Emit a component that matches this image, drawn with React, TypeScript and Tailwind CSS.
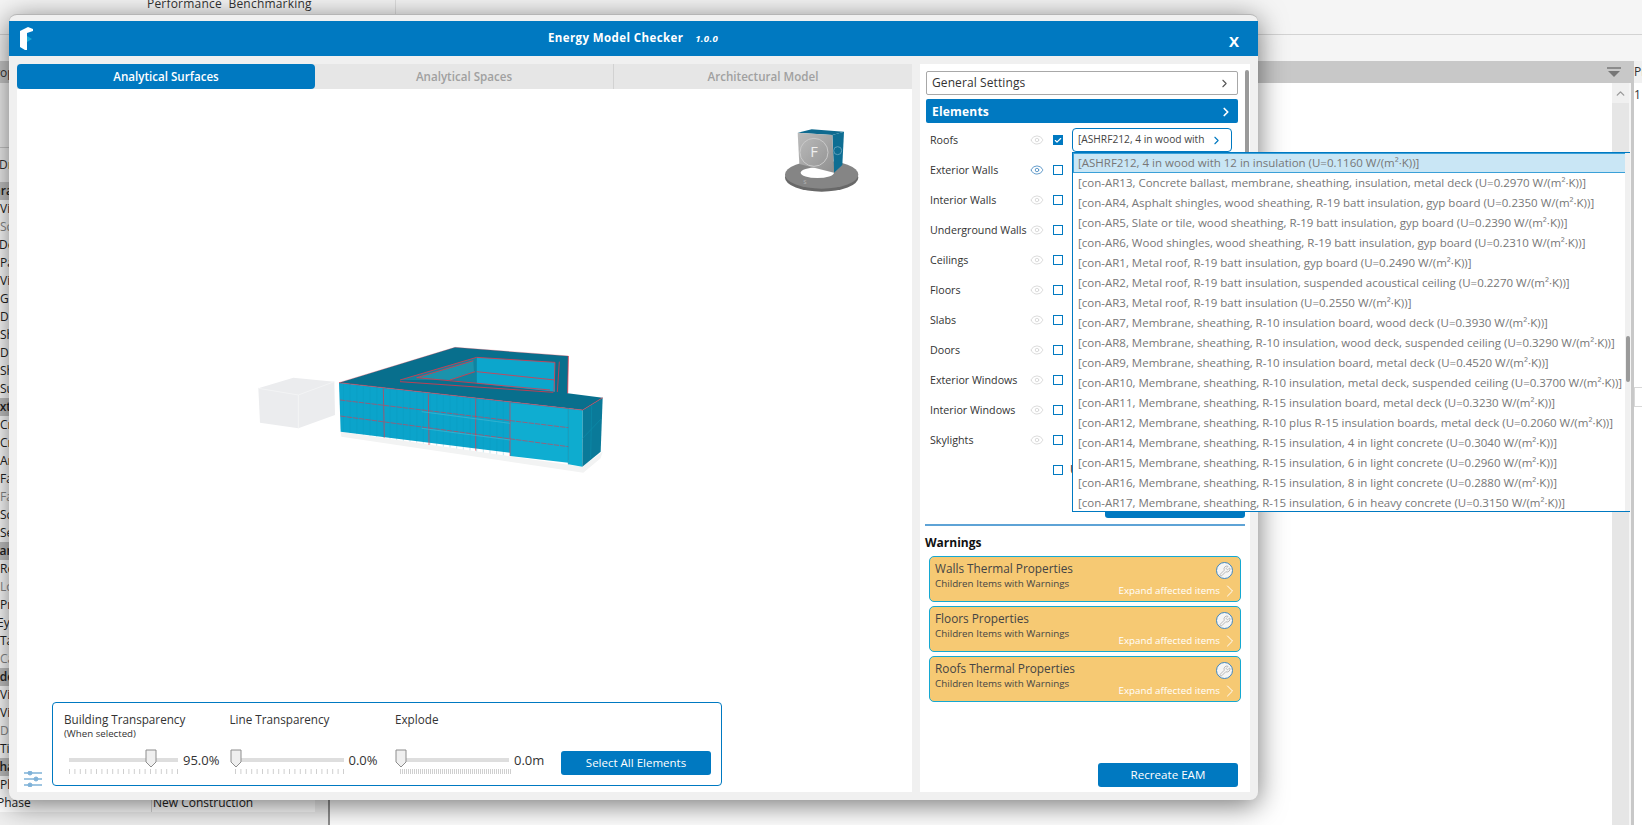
import { Check, ChevronRight, ChevronUp, Eye, Wrench } from "lucide-react";

const font = "font-['Open_Sans','Noto_Sans',sans-serif]";

const props: [string, number, "h" | "g" | "n"][] = [
  ["Graphics", -8, "h"], ["View Scale", 0, "n"], ["Scale Value", 0, "g"], ["Detail Level", -1, "n"], ["Parts Visibility", 0, "n"],
  ["Visibility/Graphics", 0, "n"], ["Graphic Display", 0, "n"], ["Discipline", 0, "n"], ["Show Hidden Lines", 0, "n"], ["Default Analysis", 0, "n"],
  ["Show Grids", 0, "n"], ["Sun Path", 0, "n"], ["Extents", -7, "h"], ["Crop View", 0, "n"], ["Crop Region", 0, "n"],
  ["Annotation Crop", 0, "n"], ["Far Clipping", 0, "n"], ["Far Clip Offset", 0, "g"], ["Scope Box", 0, "n"], ["Section Box", 0, "n"],
  ["Camera", -8, "h"], ["Rendering Settings", 0, "n"], ["Locked Orientation", 0, "g"], ["Projection Mode", 0, "n"], ["Eye Elevation", -3, "n"],
  ["Target Elevation", 0, "n"], ["Camera Position", 0, "g"], ["Identity Data", -4, "h"], ["View Template", 0, "n"], ["View Name", 0, "n"],
  ["Dependency", 0, "g"], ["Title on Sheet", 0, "n"], ["Phasing", -8, "h"], ["Phase Filter", 0, "n"], ["Phase", -3, "n"],
];

const elements = ["Roofs", "Exterior Walls", "Interior Walls", "Underground Walls", "Ceilings", "Floors", "Slabs", "Doors", "Exterior Windows", "Interior Windows", "Skylights"];

const options = [
  "[ASHRF212, 4 in wood with 12 in insulation (U=0.1160 W/(m²·K))]",
  "[con-AR13, Concrete ballast, membrane, sheathing, insulation, metal deck (U=0.2970 W/(m²·K))]",
  "[con-AR4, Asphalt shingles, wood sheathing, R-19 batt insulation, gyp board (U=0.2350 W/(m²·K))]",
  "[con-AR5, Slate or tile, wood sheathing, R-19 batt insulation, gyp board (U=0.2390 W/(m²·K))]",
  "[con-AR6, Wood shingles, wood sheathing, R-19 batt insulation, gyp board (U=0.2310 W/(m²·K))]",
  "[con-AR1, Metal roof, R-19 batt insulation, gyp board (U=0.2490 W/(m²·K))]",
  "[con-AR2, Metal roof, R-19 batt insulation, suspended acoustical ceiling (U=0.2270 W/(m²·K))]",
  "[con-AR3, Metal roof, R-19 batt insulation (U=0.2550 W/(m²·K))]",
  "[con-AR7, Membrane, sheathing, R-10 insulation board, wood deck (U=0.3930 W/(m²·K))]",
  "[con-AR8, Membrane, sheathing, R-10 insulation, wood deck, suspended ceiling (U=0.3290 W/(m²·K))]",
  "[con-AR9, Membrane, sheathing, R-10 insulation board, metal deck (U=0.4520 W/(m²·K))]",
  "[con-AR10, Membrane, sheathing, R-10 insulation, metal deck, suspended ceiling (U=0.3700 W/(m²·K))]",
  "[con-AR11, Membrane, sheathing, R-15 insulation board, metal deck (U=0.3230 W/(m²·K))]",
  "[con-AR12, Membrane, sheathing, R-10 plus R-15 insulation boards, metal deck (U=0.2060 W/(m²·K))]",
  "[con-AR14, Membrane, sheathing, R-15 insulation, 4 in light concrete (U=0.3040 W/(m²·K))]",
  "[con-AR15, Membrane, sheathing, R-15 insulation, 6 in light concrete (U=0.2960 W/(m²·K))]",
  "[con-AR16, Membrane, sheathing, R-15 insulation, 8 in light concrete (U=0.2880 W/(m²·K))]",
  "[con-AR17, Membrane, sheathing, R-15 insulation, 6 in heavy concrete (U=0.3150 W/(m²·K))]",
];

function Logo() {
  return (
    <svg width="16" height="25" viewBox="0 0 16 25" className="ml-[10px]">
      <path d="M1 5 L9 1 L14 3 L14 5 L8 7 L8 24 L6 24 L1 21 Z" fill="#ffffff" />
      <path d="M8 10 L13 13 L8 16 Z" fill="#19a9d6" />
    </svg>
  );
}

function Model() {
  const red = "#ea3346";
  const stripes = Array.from({ length: 34 }).map((_, i) => 310 + i * 20);
  return (
    <svg width="380" height="150" viewBox="0 0 1140 450" className="absolute left-[223px] top-[241px]">
      <polygon points="55,175 160,143 283,155 285,255 175,295 60,278" fill="#ebecee" />
      <polyline points="55,175 175,195 283,155" fill="none" stroke="#f3f4f5" strokeWidth="3" />
      <line x1="175" y1="195" x2="175" y2="295" stroke="#f3f4f5" strokeWidth="3" />
      <polygon points="302,305 1027,410 1088,365 1082,385 1030,428 304,320" fill="#f2f3f3" />
      <polygon points="297,158 645,52 985,78 983,190 1088,203 1028,240 985,235" fill="#086f8d" />
      <polygon points="480,150 710,82 710,160 630,150" fill="#11839f" />
      <polygon points="530,143 700,92 702,125 630,150" fill="#1b93ac" />
      <polygon points="710,82 945,97 945,185 710,160" fill="#0ca6cc" />
      <polygon points="297,158 985,235 985,390 302,305" fill="#0ba4cb" />
      <polygon points="810,220 985,235 985,398 810,378" fill="#0fadd1" />
      <polygon points="985,235 1028,240 1027,410 985,403" fill="#0eaccf" />
      <polygon points="1028,240 1088,203 1082,365 1027,410" fill="#0a7a99" />
      <g stroke="#0996ba" strokeWidth="2" opacity="0.35">
        {stripes.filter((x) => x < 810).map((x) => (
          <line key={x} x1={x} x2={x} y1={158 + (x - 297) * 0.112} y2={305 + (x - 302) * 0.145} />
        ))}
      </g>
      <g stroke={red} strokeWidth="2.4" fill="none">
        <path d="M297 158 L1028 240 L1088 203" strokeOpacity="0.85" />
        <path d="M300 210 L985 293 M301 258 L985 350" strokeDasharray="16 3" strokeOpacity="0.75" />
        <path d="M430 175 L433 323 M565 192 L567 345 M707 207 L707 362 M810 218 L810 378" strokeOpacity="0.8" />
        <path d="M480 150 L710 82 L945 97 M530 143 L700 92 M480 155 L940 187 M530 143 L930 180 M710 125 L945 150 M630 150 L705 125" />
        <path d="M945 97 L942 185 M958 95 L952 186 M985 78 L983 190" />
        <path d="M297 158 L645 52 L985 78" strokeOpacity="0.35" />
      </g>
      <path d="M985 235 L985 403 M1055 225 L1052 385 M1028 325 L1085 265" stroke="#0a8cab" strokeWidth="2" fill="none" />
      <path d="M545 245 L810 280 M545 295 L810 330" stroke="#4cbcd3" strokeWidth="3" fill="none" opacity="0.55" />
    </svg>
  );
}

function ViewCube() {
  return (
    <svg width="120" height="90" viewBox="0 0 360 270" className="absolute left-[743px] top-[21px]">
      <defs>
        <linearGradient id="face" x1="0" y1="0" x2="1" y2="1">
          <stop offset="0" stopColor="#bdbdbd" />
          <stop offset="1" stopColor="#8f8f8f" />
        </linearGradient>
      </defs>
      <ellipse cx="185" cy="203" rx="110" ry="42" fill="#686868" />
      <ellipse cx="185" cy="194" rx="110" ry="42" fill="#858585" />
      <ellipse cx="172" cy="188" rx="50" ry="16" fill="#ffffff" />
      <polygon points="113,68 155,58 252,65 217,75" fill="#0f6a8f" />
      <polygon points="217,75 252,65 247,165 222,188" fill="#0e6e93" />
      <polygon points="113,68 217,75 222,188 118,162" fill="url(#face)" />
      <circle cx="162" cy="127" r="42" fill="none" stroke="#c9c9c9" strokeWidth="3" />
      <text x="162" y="142" textAnchor="middle" fontSize="44" fill="#eeeeee" fontFamily="Open Sans, sans-serif">F</text>
      <text x="135" y="222" textAnchor="middle" fontSize="18" fill="#b5b5b5" fontFamily="Open Sans, sans-serif">S</text>
      <circle cx="233" cy="122" r="12" fill="none" stroke="#5d9fba" strokeWidth="3" />
    </svg>
  );
}

function Thumb() {
  return (
    <svg width="12" height="19" viewBox="0 0 12 19" className="absolute top-[-9px]">
      <path d="M1 1 H11 V13 L6 18 L1 13 Z" fill="#efefef" stroke="#8d8d8d" />
    </svg>
  );
}

function Slider({ label, sub, value, pos, ticks, step, w }: { label: string; sub?: string; value: string; pos: number; ticks: number; step: number; w: string }) {
  return (
    <div className={`flex flex-col ${w}`}>
      <div className="whitespace-nowrap text-[11.7px] leading-[16px] text-[#333]">{label}</div>
      <div className="h-[13px] text-[9.7px] leading-[13px] text-[#333]">{sub}</div>
      <div className="mt-[12px] flex items-center pl-[5px]">
        <div className="relative h-[4px] w-[109px] bg-[#dedede]">
          <div className="absolute" style={{ left: pos }}><Thumb /></div>
        </div>
        <div className="ml-[5px] text-[13px] leading-[16px] text-[#333]">{value}</div>
      </div>
      <svg width="112" height="6" className="ml-[5px] mt-[1px]">
        {Array.from({ length: ticks }).map((_, i) => (
          <line key={i} x1={i * step + 0.5} x2={i * step + 0.5} y1="0" y2="5" stroke="#cfcfcf" />
        ))}
      </svg>
    </div>
  );
}

function ElementRow({ name, i }: { name: string; i: number }) {
  return (
    <div className="mb-[6px] flex h-[24px] items-center pl-[10px]">
      <div className="w-[100px] shrink-0 whitespace-nowrap text-[10.7px] text-[#333]">{name}</div>
      <Eye size={14} strokeWidth={1.5} className={`shrink-0 ${i === 1 ? "text-[#4f8fc4]" : "text-[#d6d6d6]"}`} />
      <div className={`ml-[9px] flex h-[10px] w-[10px] shrink-0 items-center justify-center border-[1.5px] border-[#0079c1] ${i === 0 ? "bg-[#0079c1]" : "bg-white"}`}>
        {i === 0 && <Check size={9} strokeWidth={3.5} className="text-white" />}
      </div>
      <div className="ml-[9px] flex h-[24px] w-[160px] shrink-0 items-center rounded-[4px] border border-[#0079c1] bg-white pl-[5px] pr-[8px]">
        {i === 0 && (
          <>
            <span className="w-[127px] overflow-hidden whitespace-nowrap text-[10.2px] text-[#444]">[ASHRF212, 4 in wood with 12 in</span>
            <ChevronRight size={13} className="ml-auto text-[#0079c1]" />
          </>
        )}
      </div>
    </div>
  );
}

function WarningCard({ title }: { title: string }) {
  return (
    <div className="relative h-[46px] rounded-[5px] border border-[#14a8d2] bg-[#f6c973] pl-[5px] pt-[2px]">
      <div className="text-[11.8px] leading-[18px] text-[#444]">{title}</div>
      <div className="text-[9.8px] leading-[14px] text-[#444]">Children Items with Warnings</div>
      <div className="absolute right-[7px] top-[5px] flex h-[17px] w-[17px] items-center justify-center rounded-full border border-[#3f86c0] bg-[#f5f5f5]">
        <Wrench size={12} strokeWidth={2} className="text-[#b9b9b9]" />
      </div>
      <div className="absolute bottom-0 right-0 flex items-center text-[9.8px] leading-[14px] text-white">
        Expand affected items
        <ChevronRight size={20} strokeWidth={1.2} className="text-white" />
      </div>
    </div>
  );
}

export default function App() {
  return (
    <div className={`relative flex h-[825px] w-[1642px] flex-col overflow-hidden bg-[#f5f5f5] ${font}`}>
      <div className="h-[35px] border-b border-[#d3d3d3]">
        <div className="h-[34px] w-[396px] overflow-hidden whitespace-pre border-r border-[#dedede] pl-[147px] text-[12px] leading-[8px] tracking-[0.2px] text-[#333]">
          Performance  Benchmarking
        </div>
      </div>
      <div className="h-[26px]" />
      <div className="flex flex-1">
        <div className="flex w-[330px] flex-col border-r-2 border-[#8f8f8f] bg-[#f0f0f0]">
          <div className="h-[22px] overflow-hidden whitespace-nowrap bg-[#c8c8c8] pl-[1px] text-[12px] leading-[24px] text-[#333]"><span className="-ml-[13px] inline-block">Properties</span></div>
          <div className="h-[65px] border-b border-[#c8c8c8]" />
          <div className="h-[34px] text-[12px] leading-[34px] text-[#333]"><span className="-ml-[1px] inline-block">Drafting</span></div>
          <div className="w-[315px] bg-white">
            {props.map(([t, off, kind]) => (
              <div key={t} className={`flex h-[18px] items-center overflow-hidden whitespace-nowrap text-[12px] ${kind === "h" ? "bg-[#c4c4c4] font-semibold text-[#222]" : kind === "g" ? "text-[#8a8a8a]" : "text-[#222]"}`}>
                <span className="inline-block shrink-0 border-r border-[#d5d5d5]" style={{ marginLeft: off, width: 152 - off }}>{t}</span>
                {t === "Phase" && <span className="pl-[1px]">New Construction</span>}
              </div>
            ))}
          </div>
        </div>
        <div className="flex flex-1 flex-col">
          <div className="flex h-[22px] items-center justify-end bg-[#c8c8c8] pr-[9px]">
            <svg width="16" height="12" viewBox="0 0 16 12">
              <path d="M1 2h14" stroke="#777" strokeWidth="1.5" />
              <path d="M2 5h12l-6 6z" fill="#777" />
            </svg>
          </div>
          <div className="flex flex-1">
            <div className="flex-1 bg-white" />
            <div className="mr-[2px] w-[17px] bg-[#e6e6e6]">
              <div className="flex h-[20px] items-center justify-center bg-[#f0f0f0]">
                <ChevronUp size={13} strokeWidth={2.5} className="text-[#9a9a9a]" />
              </div>
            </div>
          </div>
        </div>
        <div className="w-[3px] bg-[#c8c8c8]" />
        <div className="flex w-[8px] flex-col bg-white">
          <div className="h-[22px] overflow-hidden whitespace-nowrap bg-[#f0f0f0] text-[12px] leading-[22px] text-[#333]">Properties</div>
          <div className="h-[24px] text-[12px] leading-[24px] text-[#333]">1</div>
          <div className="mt-[280px] h-[20px] border-l border-y border-[#d8d8d8]" />
        </div>
      </div>

      <div className="absolute left-[9px] top-[14px] flex h-[786px] w-[1249px] flex-col rounded-[8px] border-t border-[#b5b5b5] bg-[#f0f0f0] pt-[6px] shadow-[0_5px_28px_rgba(0,0,0,0.55)]">
        <div className="relative flex h-[35px] shrink-0 items-center bg-[#0079c1] text-white">
          <Logo />
          <div className="absolute left-[539px] top-[9px] flex items-baseline font-bold">
            <span className="text-[11.5px] leading-[16px] tracking-[0.4px]">Energy Model Checker</span>
            <span className="ml-[12px] text-[9.5px] italic leading-[16px] tracking-[0.3px]">1.0.0</span>
          </div>
          <div className="absolute right-[19px] top-[10px] text-[15px] font-bold leading-[20px]">X</div>
        </div>
        <div className="flex flex-1 gap-[8px] p-[8px]">
          <div className="flex w-[895px] flex-col bg-white">
            <div className="flex h-[25px] shrink-0 bg-[#e6e6e6] text-[11.6px] font-semibold">
              <div className="flex w-[298px] items-center justify-center rounded-[4px] bg-[#0079c1] text-white">Analytical Surfaces</div>
              <div className="flex w-[299px] items-center justify-center border-r border-[#d2d2d2] text-[#a0a0a0]">Analytical Spaces</div>
              <div className="flex w-[298px] items-center justify-center text-[#a0a0a0]">Architectural Model</div>
            </div>
            <div className="relative flex-1">
              <ViewCube />
              <Model />
              <svg width="18" height="16" viewBox="0 0 18 16" className="absolute left-[7px] top-[682px]" stroke="#7fb2d8" fill="#7fb2d8">
                <path d="M0 2h18M0 8h18M0 14h18" strokeWidth="1.5" />
                <circle cx="6" cy="2" r="2" /><circle cx="12" cy="8" r="2" /><circle cx="6" cy="14" r="2" />
              </svg>
              <div className="absolute left-[35px] top-[613px] flex h-[84px] w-[670px] rounded-[4px] border border-[#0079c1] bg-white pl-[11px] pt-[8px]">
                <Slider label="Building Transparency" sub="(When selected)" value="95.0%" pos={76} ticks={21} step={5.4} w="w-[165.5px]" />
                <Slider label="Line Transparency" value="0.0%" pos={-5} ticks={21} step={5.4} w="w-[165.5px]" />
                <Slider label="Explode" value="0.0m" pos={-5} ticks={56} step={2} w="w-[166px]" />
                <div className="mt-[40px] flex h-[24px] w-[150px] items-center justify-center rounded-[3px] bg-[#0079c1] text-[11.5px] text-white">Select All Elements</div>
              </div>
            </div>
          </div>

          <div className="relative flex w-[330px] flex-col bg-white pt-[7px]">
            <div className="absolute left-[325px] top-[6px] z-10 h-[90px] w-[4px] rounded-full bg-[#9a9a9a]" />
            <div className="ml-[6px] flex h-[24px] w-[312px] items-center justify-between rounded-[2px] border border-[#a8a8a8] pl-[5px] pr-[6px] text-[12px] tracking-[0.1px] text-[#333]">
              General Settings
              <ChevronRight size={13} className="text-[#555]" />
            </div>
            <div className="ml-[6px] mt-[4px] flex h-[24px] w-[312px] items-center justify-between rounded-[2px] bg-[#0079c1] pl-[6px] pr-[5px] pt-[1px] text-[12px] font-bold tracking-[0.2px] text-white">
              Elements
              <ChevronRight size={14} strokeWidth={3} />
            </div>
            <div className="mt-[5px]">
              {elements.map((n, i) => <ElementRow key={n} name={n} i={i} />)}
              <div className="mb-[6px] flex h-[24px] items-center pl-[133px]">
                <div className="h-[10px] w-[10px] border-[1.5px] border-[#0079c1] bg-white" />
                <div className="ml-[7px] w-[2px] overflow-hidden text-[12px] text-[#333]">Use</div>
              </div>
            </div>
            <div className="ml-[185px] mt-[6px] h-[24px] w-[140px] rounded-[3px] bg-[#0079c1]" />
            <div className="ml-[5px] mt-[6px] h-[2px] w-[320px] bg-[#5ea3d6]" />
            <div className="ml-[5px] mt-[9px] text-[12px] font-bold leading-[16px] text-[#111]">Warnings</div>
            <div className="ml-[9px] mt-[5px] flex w-[312px] flex-col gap-[4px]">
              <WarningCard title="Walls Thermal Properties" />
              <WarningCard title="Floors Properties" />
              <WarningCard title="Roofs Thermal Properties" />
            </div>
            <div className="ml-[178px] mt-auto mb-[5px] flex h-[24px] w-[140px] items-center justify-center rounded-[3px] bg-[#0079c1] text-[11.6px] text-white">Recreate EAM</div>

            <div className="absolute left-[152px] top-[88px] z-10 h-[360px] w-[558px] border-y border-l border-[#0079c1] bg-white">
              {options.map((o, i) => (
                <div key={o} className={`flex h-[20px] w-[553px] items-center whitespace-nowrap pl-[5px] text-[11.5px] text-[#777] ${i === 0 ? "bg-[#c9e6f5] outline outline-1 -outline-offset-1 outline-[#3aa0d8]" : ""}`}>
                  {o}
                </div>
              ))}
              <div className="absolute bottom-0 right-0 top-0 w-[5px] bg-[#f0f0f0]">
                <div className="absolute left-[1px] top-[183px] h-[46px] w-[4px] rounded-full bg-[#9a9a9a]" />
              </div>
            </div>
          </div>
        </div>
      </div>
    </div>
  );
}
